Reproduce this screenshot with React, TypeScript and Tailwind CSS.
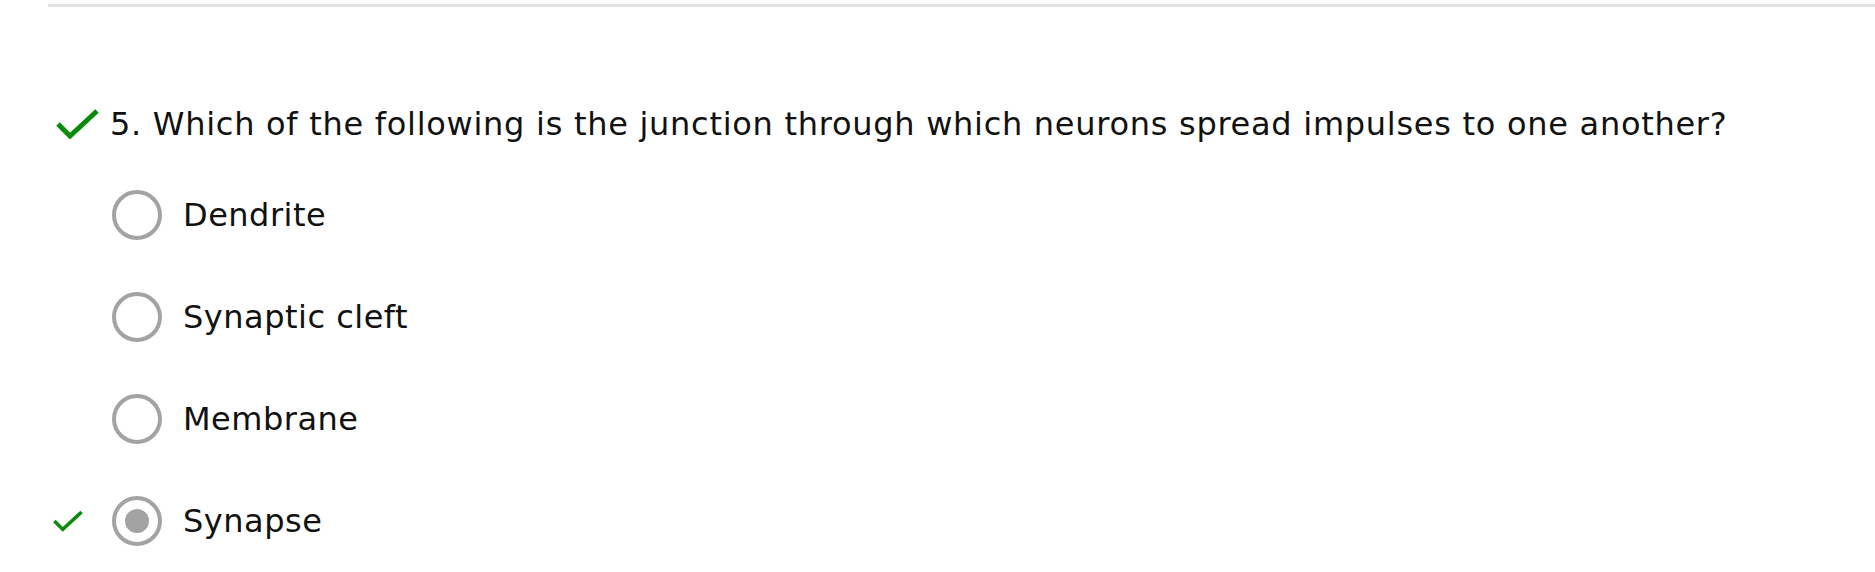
import React from 'react';

const options = [
  { label: 'Dendrite', selected: false, correct: false },
  { label: 'Synaptic cleft', selected: false, correct: false },
  { label: 'Membrane', selected: false, correct: false },
  { label: 'Synapse', selected: true, correct: true },
];

const Check = ({ className }: { className?: string }) => (
  <svg viewBox="0 0 43 30" className={className} fill="none">
    <path d="M2 15 L14 27 L41 2" stroke="#0a8a0a" strokeWidth="5" strokeLinecap="butt" strokeLinejoin="miter" />
  </svg>
);

const Radio = ({ selected }: { selected: boolean }) => (
  <div className="w-[50px] h-[50px] rounded-full border-4 border-[#a3a3a3] flex items-center justify-center shrink-0">
    {selected && <div className="w-[24px] h-[24px] rounded-full bg-[#a3a3a3]" />}
  </div>
);

export default function App() {
  return (
    <div className="w-[1875px] h-[572px] bg-white text-black overflow-hidden" style={{ fontFamily: '"DejaVu Sans", Verdana, sans-serif' }}>
      <div className="pt-[4px] pl-[48px]">
        <div className="h-[3px] bg-[#e2e2e2]" />
      </div>

      <div className="flex items-center h-[50px] mt-[92px] pl-[56px]">
        <Check className="w-[43px] h-[30px] shrink-0" />
        <span className="ml-[11px] text-[32px] tracking-[0.72px] leading-none text-[#111]">
          5. Which of the following is the junction through which neurons spread impulses to one another?
        </span>
      </div>

      <div className="mt-[15px]">
        {options.map((o) => (
          <div key={o.label} className="flex items-center h-[102px] pl-[48px]">
            <div className="w-[64px] flex items-center pl-[5px]">
              {o.correct && <Check className="w-[30px] h-[22px]" />}
            </div>
            <Radio selected={o.selected} />
            <span className="ml-[21px] text-[32px] tracking-[0.5px] leading-none text-[#111]">{o.label}</span>
          </div>
        ))}
      </div>
    </div>
  );
}
